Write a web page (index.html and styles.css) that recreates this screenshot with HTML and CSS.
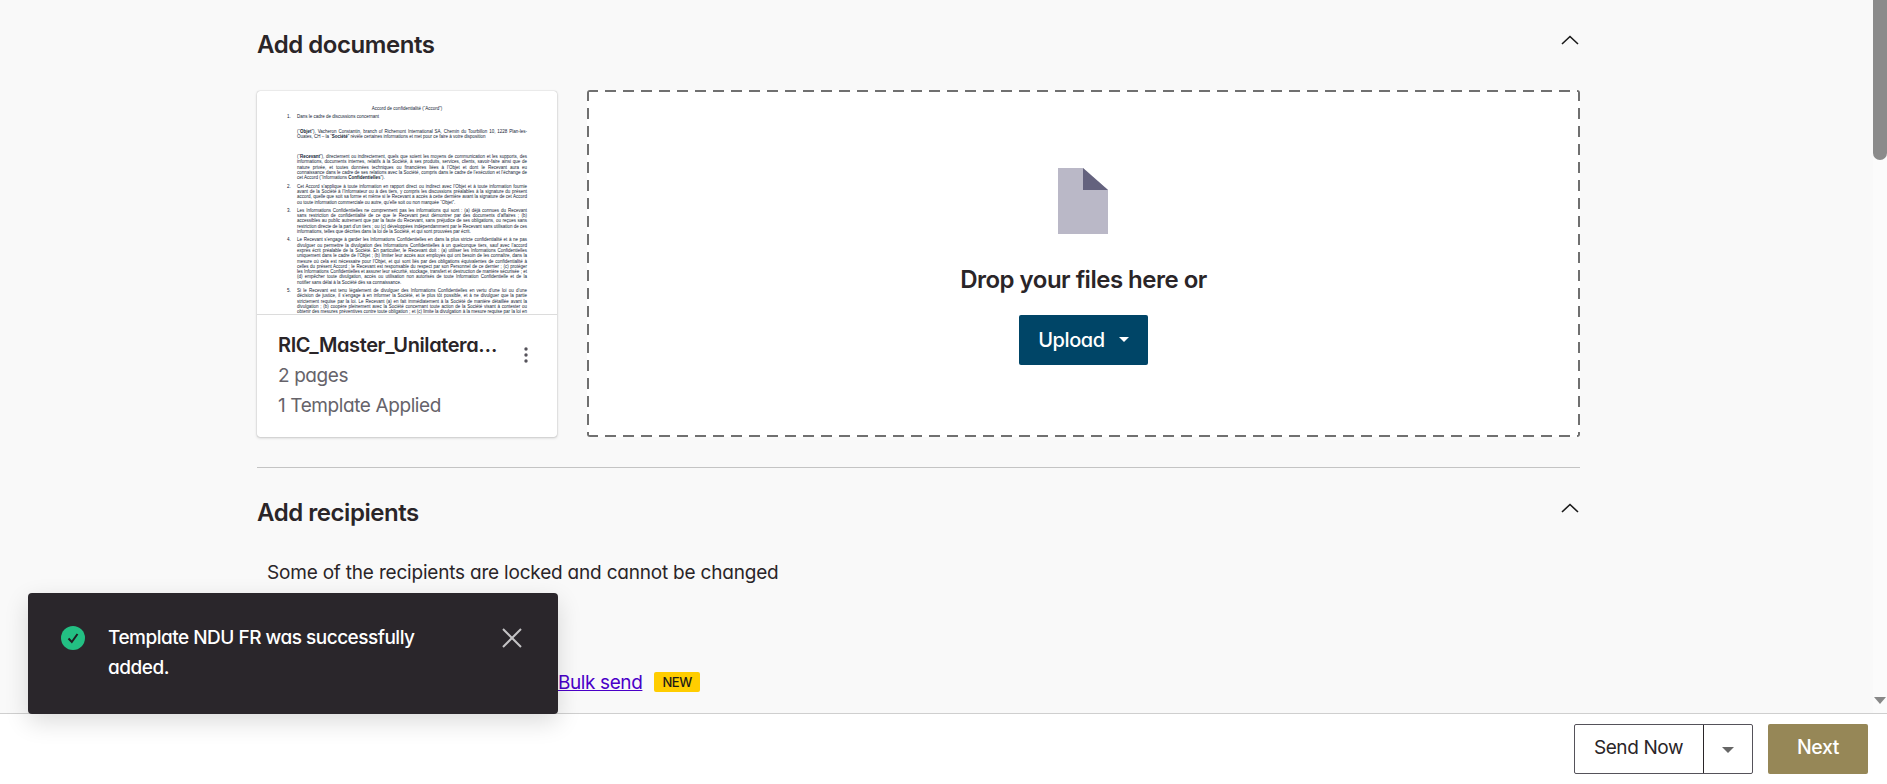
FILE: index.html
```html
<!DOCTYPE html>
<html lang="en">
<head>
<meta charset="utf-8">
<title>Add documents</title>
<link rel="stylesheet" href="styles.css">
</head>
<body>
<div class="app">
  <div class="viewport">
    <main class="content">
      <section class="section section-docs">
        <header class="section-head">
          <h2>Add documents</h2>
          <svg class="chevron" width="18" height="10" viewBox="0 0 18 10"><path d="M1 9 9 1.500 17 9" fill="none" stroke="#1a1a1a" stroke-width="1.600"/></svg>
        </header>
        <div class="docs-row">
          <article class="doc-card">
            <div class="thumb">
              <p class="t-title">Accord de confidentialité (“Accord”)</p>
              <ol class="t-list">
                <li>Dans le cadre de discussions concernant
                  <p class="t-p1">(“<b>Objet</b>”), Vacheron Constantin, branch of Richemont International SA, Chemin du Tourbillon 10, 1228 Plan-les-Ouates, CH – la “<b>Société</b>” révèle certaines informations et met pour ce faire à votre disposition</p>
                  <p class="t-p2">(“<b>Recevant</b>”), directement ou indirectement, quels que soient les moyens de communication et les supports, des informations, documents internes, relatifs à la Société, à ses produits, services, clients, savoir-faire ainsi que de nature privée, et toutes données techniques ou financières liées à l’Objet et dont le Recevant aura eu connaissance dans le cadre de ses relations avec la Société, compris dans le cadre de l’exécution et l’échange de cet Accord (“Informations <b>Confidentielles</b>”).</p>
                </li>
                <li>Cet Accord s’applique à toute information en rapport direct ou indirect avec l’Objet et à toute information fournie avant de la Société à l’Informateur ou à des tiers, y compris les discussions préalables à la signature du présent accord, quelle que soit sa forme et même si le Recevant a accès à cette dernière avant la signature de cet Accord ou toute information commerciale ou autre, qu’elle soit ou non marquée “Objet”.</li>
                <li>Les Informations Confidentielles ne comprennent pas les informations qui sont : (a) déjà connues du Recevant sans restriction de confidentialité de ce que le Recevant peut démontrer par des documents d’affaires ; (b) accessibles au public autrement que par la faute du Recevant, sans préjudice de ses obligations, ou reçues sans restriction directe de la part d’un tiers ; ou (c) développées indépendamment par le Recevant sans utilisation de ces informations, telles que décrites dans la loi de la Société, et qui sont prouvées par écrit.</li>
                <li>Le Recevant s’engage à garder les Informations Confidentielles en dans la plus stricte confidentialité et à ne pas divulguer ou permettre la divulgation des Informations Confidentielles à un quelconque tiers, sauf avec l’accord exprès écrit préalable de la Société. En particulier, le Recevant doit : (a) utiliser les Informations Confidentielles uniquement dans le cadre de l’Objet ; (b) limiter leur accès aux employés qui ont besoin de les connaître, dans la mesure où cela est nécessaire pour l’Objet, et qui sont liés par des obligations équivalentes de confidentialité à celles du présent Accord ; le Recevant est responsable du respect par son Personnel de ce dernier ; (c) protéger les Informations Confidentielles et assurer leur sécurité, stockage, transfert et destruction de manière sécurisée ; et (d) empêcher toute divulgation, accès ou utilisation non autorisés de toute Information Confidentielle et de la notifier sans délai à la Société dès sa connaissance.</li>
                <li>Si le Recevant est tenu légalement de divulguer des Informations Confidentielles en vertu d’une loi ou d’une décision de justice, il s’engage à en informer la Société, et le plus tôt possible, et à ne divulguer que la partie strictement requise par la loi. Le Recevant (a) en fait immédiatement à la Société de manière détaillée avant la divulgation ; (b) coopère pleinement avec la Société concernant toute action de la Société visant à contester ou obtenir des mesures préventives contre toute obligation ; et (c) limite la divulgation à la mesure requise par la loi en vigueur locale.</li>
                <li>Le présent Accord entre en vigueur à compter de sa date de signature par les parties et restera en vigueur pendant une durée de cinq ans après sa date de signature.</li>
              </ol>
            </div>
            <div class="doc-info">
              <div class="doc-text">
                <div class="doc-name">RIC_Master_Unilateral_NDA_FR</div>
                <div class="doc-meta">2 pages</div>
                <div class="doc-meta">1 Template Applied</div>
              </div>
              <svg class="kebab" width="4" height="16" viewBox="0 0 4 16"><circle cx="2" cy="2" r="1.700"/><circle cx="2" cy="8" r="1.700"/><circle cx="2" cy="14" r="1.700"/></svg>
            </div>
          </article>
          <div class="dropzone">
            <svg class="file-icon" width="50" height="66" viewBox="0 0 50 66"><path d="M0 0H25L50 22V66H0Z" fill="#bab8c7"/><path d="M25 0V22H50Z" fill="#64627e"/></svg>
            <p class="drop-text">Drop your files here or</p>
            <button class="btn-upload">Upload<span class="caret caret-white"></span></button>
          </div>
        </div>
      </section>
      <section class="section section-recipients">
        <header class="section-head">
          <h2>Add recipients</h2>
          <svg class="chevron" width="18" height="10" viewBox="0 0 18 10"><path d="M1 9 9 1.500 17 9" fill="none" stroke="#1a1a1a" stroke-width="1.600"/></svg>
        </header>
        <p class="locked-note">Some of the recipients are locked and cannot be changed</p>
        <div class="bulk-row">
          <a class="bulk-link" href="#">Bulk send</a>
          <span class="badge">NEW</span>
        </div>
      </section>
    </main>
    <div class="scrollbar">
      <div class="thumbbar"></div>
      <span class="scroll-arrow"></span>
    </div>
  </div>
  <footer class="footer">
    <div class="split">
      <button class="split-main">Send Now</button>
      <button class="split-caret"><span class="caret caret-grey"></span></button>
    </div>
    <button class="btn-next">Next</button>
  </footer>
  <div class="toast">
    <svg class="toast-check" width="24" height="24" viewBox="0 0 24 24"><circle cx="12" cy="12" r="12" fill="#23bf83"/><path d="M7.500 12.500 10.800 16 16.500 8" fill="none" stroke="#1f1d22" stroke-width="2"/></svg>
    <p class="toast-text">Template NDU FR was successfully added.</p>
    <svg class="toast-close" width="22" height="22" viewBox="0 0 22 22"><path d="M2 2 20 20M20 2 2 20" stroke="#c4c3c5" stroke-width="2" fill="none"/></svg>
  </div>
</div>
</body>
</html>
```
FILE: styles.css
```css
* { box-sizing: border-box; }
html, body { margin: 0; height: 100%; overflow: hidden; }
body { font-family: Inter, Lato, sans-serif; font-feature-settings: "cv11" 1; color: #2a2528; background: #fff; letter-spacing: -0.4px; }
button { font-family: inherit; font-feature-settings: inherit; letter-spacing: inherit; }
.app { position: relative; display: flex; flex-direction: column; height: 784px; }
.viewport { display: flex; height: 713px; flex: none; overflow: hidden; background: #f9f9f9; }
.content { flex: 1; padding-left: 257px; padding-right: 293px; min-width: 0; overflow: hidden; }
.section-docs { padding-top: 27px; padding-bottom: 30px; border-bottom: 1px solid #c4c4c4; }
.section-head { display: flex; justify-content: space-between; align-items: flex-start; height: 36px; }
.section-head h2 { margin: 0; font-size: 24px; line-height: 36px; font-weight: 600; letter-spacing: -0.45px; }
.chevron { margin-top: 8px; margin-right: 1px; }
.docs-row { display: flex; gap: 30px; margin-top: 27px; align-items: flex-end; }
.doc-card { width: 300px; height: 346px; flex: none; background: #fff; border-radius: 3px; box-shadow: 0 0 1px rgba(0,0,0,.35), 0 1px 3px rgba(0,0,0,.18); overflow: hidden; display: flex; flex-direction: column; }
.thumb { height: 224px; flex: none; overflow: hidden; padding-top: 15px; padding-left: 30px; padding-right: 30px; border-bottom: 1px solid #dcdcdc; font-family: "Liberation Sans", sans-serif; font-feature-settings: normal; letter-spacing: 0; font-size: 4.500px; line-height: 5.300px; color: #111a33; }
.t-title { margin: 0 0 3px; text-align: center; }
.t-list { margin: 0; padding: 0 0 0 10px; list-style: none; counter-reset: item; }
.t-list li { margin-bottom: 3px; text-align: justify; counter-increment: item; }
.t-list li::before { content: counter(item) "."; float: left; width: 10px; margin-left: -10px; }
.t-p1 { margin: 9px 0 0; }
.t-p2 { margin: 15px 0 0; }
.doc-info { display: flex; justify-content: space-between; padding: 15px 29px 0 21px; flex: 1; }
.doc-text { width: 222px; }
.doc-name { font-size: 20px; line-height: 31px; font-weight: 600; white-space: nowrap; overflow: hidden; text-overflow: ellipsis; }
.doc-meta { font-size: 19px; line-height: 29.500px; color: #66636a; }
.kebab { fill: #55525a; margin-top: 17px; }
.dropzone { width: 993px; height: 347px; flex: none; background-color: #fff; background-image: repeating-linear-gradient(to right, #707070 0 11px, transparent 11px 18px), repeating-linear-gradient(to right, #707070 0 11px, transparent 11px 18px), repeating-linear-gradient(to bottom, #707070 0 11px, transparent 11px 18px), repeating-linear-gradient(to bottom, #707070 0 11px, transparent 11px 18px); background-size: 100% 2px, 100% 2px, 2px 100%, 2px 100%; background-position: 0 0, 0 100%, 0 0, 100% 0; background-repeat: no-repeat; border-radius: 3px; display: flex; flex-direction: column; align-items: center; padding-top: 78px; }
.file-icon { flex: none; margin-left: -1px; }
.drop-text { margin: 29px 0 0; font-size: 24px; line-height: 34px; font-weight: 600; letter-spacing: -0.5px; }
.btn-upload { margin-top: 18px; width: 129px; height: 50px; border: 0; border-radius: 2px; background: #004567; color: #fff; font-size: 20px; font-weight: 500; display: flex; align-items: center; justify-content: center; gap: 14px; padding: 0 0 1px; }
.caret { display: inline-block; width: 0; height: 0; border-left: 6px solid transparent; border-right: 6px solid transparent; }
.caret-white { border-left-width: 5px; border-right-width: 5px; border-top: 5px solid #fff; }
.caret-grey { border-top: 6px solid #666; }
.section-recipients { padding-top: 27px; }
.locked-note { margin: 27px 0 0 10px; font-size: 19px; line-height: 30px; letter-spacing: -0.2px; }
.bulk-row { display: flex; align-items: center; gap: 12px; margin-top: 81px; margin-left: 301px; height: 26px; }
.bulk-link { color: #4a00c8; font-size: 19px; }
.badge { background: #ffcd00; color: #1e1b16; font-size: 13px; font-weight: 500; padding: 0 8px; line-height: 20px; border-radius: 2px; }
.scrollbar { width: 14px; flex: none; background: #fbfbfb; display: flex; flex-direction: column; justify-content: space-between; align-items: center; }
.thumbbar { width: 14px; height: 160px; background: #8b8b8b; border-radius: 0 0 7px 7px; }
.scroll-arrow { width: 0; height: 0; border-left: 6px solid transparent; border-right: 6px solid transparent; border-top: 7px solid #888; margin-bottom: 9px; }
.footer { flex: 1; background: #fff; border-top: 1px solid #cfcfcf; display: flex; justify-content: flex-end; gap: 15px; padding: 10px 19px 0 0; }
.split { display: flex; height: 50px; border: 1px solid #55525a; border-radius: 2px; background: #fff; }
.split-main { width: 129px; border: 0; border-right: 1px solid #2a2528; background: none; font-size: 19px; color: #2a2528; padding: 0 1px 4px 0; }
.split-caret { width: 48px; border: 0; background: none; display: flex; align-items: center; justify-content: center; padding-top: 3px; }
.btn-next { width: 100px; height: 50px; border: 0; border-radius: 2px; background: #968757; color: #fff; font-size: 19.500px; font-weight: 500; padding: 0 0 4px; }
.toast { position: absolute; left: 28px; top: 593px; width: 530px; height: 121px; background: #2a262b; border-radius: 4px; box-shadow: 0 8px 24px rgba(0,0,0,.14); display: flex; align-items: flex-start; padding: 30px 35px 0 33px; color: #fff; }
.toast-check { flex: none; margin-top: 3px; }
.toast-text { margin: 0 0 0 23px; width: 330px; font-size: 19px; line-height: 30px; font-weight: 500; letter-spacing: -0.5px; }
.toast-close { flex: none; margin-left: auto; margin-top: 4px; }
```
